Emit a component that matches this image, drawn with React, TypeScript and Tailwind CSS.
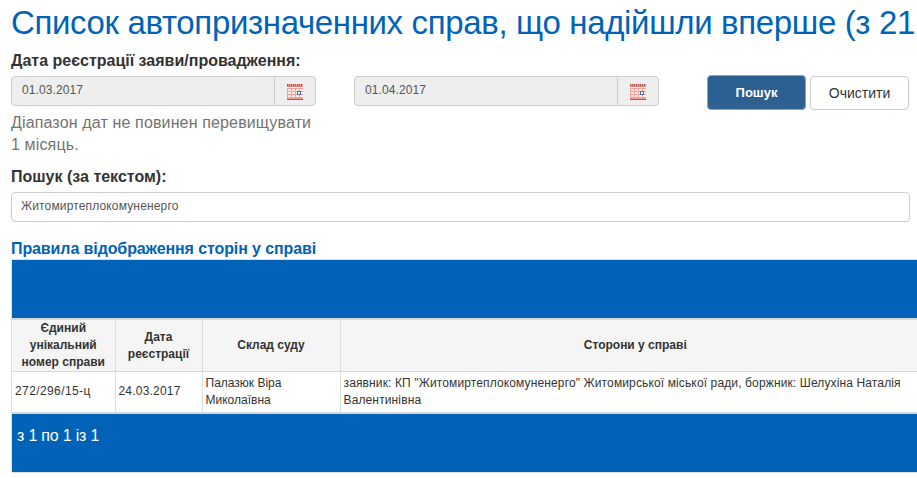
import React from "react";

const CalendarIcon = () => (
  <svg width="16" height="16" viewBox="0 0 16 16" shapeRendering="crispEdges">
    <rect x="0" y="0" width="16" height="16" fill="#f2a098" />
    {[0, 2, 4, 6, 8, 10, 12, 14].map((x) => (
      <rect key={x} x={x} y="0" width="1" height="2" fill="#a8564f" />
    ))}
    <rect x="0" y="2" width="16" height="1" fill="#e2837c" />
    <rect x="0" y="3" width="16" height="1" fill="#fdeeec" />
    <rect x="0" y="15" width="16" height="1" fill="#b5524c" />
    {[1, 5, 9, 13].map((x) =>
      [5, 8, 11].map((y) => (
        <rect key={`${x}-${y}`} x={x} y={y} width="3" height="2" fill="#fdeeec" />
      ))
    )}
    <rect x="10" y="7" width="4" height="4" fill="#3b6fe0" />
    <rect x="11" y="8" width="2" height="2" fill="#fff" />
  </svg>
);

const DateField = ({ value }: { value: string }) => (
  <div className="flex h-[30px] w-[305px] rounded border border-[#ccc] bg-[#eee]">
    <div className="flex-1 pl-[10px] pt-[5px] text-[12px] leading-[17px] tracking-[0.1px] text-[#555]">{value}</div>
    <div className="flex w-[41px] items-center justify-center border-l border-[#ccc] pt-px">
      <CalendarIcon />
    </div>
  </div>
);

const App: React.FC = () => {
  return (
    <div className="h-[478px] w-[917px] overflow-hidden bg-white pl-[11px] font-['Liberation_Sans',Arial,sans-serif] text-[#333]">
      <h1 className="h-[50px] whitespace-nowrap pt-[3px] text-[33px] leading-[40px] tracking-[-0.35px] font-normal text-[#0063b8]">
        Список автопризначенних справ, що надійшли вперше (з 21
      </h1>

      <div className="h-[26px] text-[16px] leading-[22px] font-bold">Дата реєстрації заяви/провадження:</div>

      <div className="flex items-start">
        <div className="w-[305px]">
          <DateField value="01.03.2017" />
          <p className="mt-[6px] text-[16px] leading-[22px] tracking-[0.14px] text-[#737373]">
            Діапазон дат не повинен перевищувати 1 місяць.
          </p>
        </div>
        <div className="ml-[38px]">
          <DateField value="01.04.2017" />
        </div>
        <button className="ml-[48px] -mt-px h-[35px] w-[99px] rounded border border-[#7ea6e0] bg-[#2b6090] pt-px text-[13px] font-bold text-white">
          Пошук
        </button>
        <button className="ml-[4px] h-[34px] w-[99px] rounded border border-[#ccc] bg-white pt-px text-[14px] text-[#333]">
          Очистити
        </button>
      </div>

      <div className="mt-[10px] h-[26px] text-[16px] leading-[22px] font-bold">Пошук (за текстом):</div>
      <div className="h-[30px] w-[899px] rounded border border-[#ccc] bg-white pl-[9px] pt-[5px] text-[12px] leading-[17px] tracking-[0.15px] text-[#555]">
        Житомиртеплокомуненерго
      </div>

      <h2 className="mt-[17px] h-[20px] text-[16px] leading-[20px] tracking-[-0.1px] font-bold text-[#0063b8]">
        Правила відображення сторін у справі
      </h2>

      <div className="w-[920px] rounded-[3px] border border-[#ddd]">
        <div className="h-[58px] bg-[#0063b8]" />
        <table className="w-full table-fixed border-collapse text-[12px] leading-[17px] text-[#333]">
          <colgroup>
            <col className="w-[103px]" />
            <col className="w-[87px]" />
            <col className="w-[138px]" />
            <col />
          </colgroup>
          <thead>
            <tr className="h-[52px] border-t-2 border-b border-[#d8d8d8] bg-[#f5f5f5] text-center font-bold">
              <th className="border-r border-[#ddd] px-[2px]">Єдиний унікальний номер справи</th>
              <th className="border-r border-[#ddd] px-[2px]">Дата реєстрації</th>
              <th className="border-r border-[#ddd] px-[2px]">Склад суду</th>
              <th className="px-[2px]">Сторони у справі</th>
            </tr>
          </thead>
          <tbody>
            <tr className="h-[41px] border-b-2 border-[#d8d8d8]">
              <td className="border-r border-[#ddd] px-[3px] tracking-[0.4px]">272/296/15-ц</td>
              <td className="border-r border-[#ddd] px-[3px] tracking-[0.2px]">24.03.2017</td>
              <td className="border-r border-[#ddd] px-[3px]">Палазюк Віра Миколаївна</td>
              <td className="px-[3px] tracking-[0.13px]">
                заявник: КП "Житомиртеплокомуненерго" Житомирської міської ради, боржник: Шелухіна Наталія Валентинівна
              </td>
            </tr>
          </tbody>
        </table>
        <div className="h-[58px] bg-[#0063b8] pl-[5px] pt-[12px] text-[16px] leading-[20px] tracking-[-0.2px] text-white">з 1 по 1 із 1</div>
      </div>
    </div>
  );
};

export default App;
